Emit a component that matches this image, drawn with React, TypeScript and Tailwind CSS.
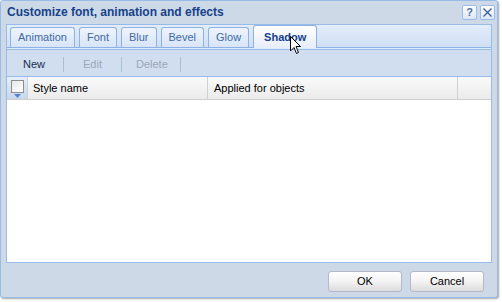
import React from "react";

const tabs = ["Animation", "Font", "Blur", "Bevel", "Glow", "Shadow"];

export default function App() {
  return (
    <div className="w-[502px] h-[302px] bg-white" style={{ fontFamily: '"Liberation Sans", Arial, sans-serif' }}>
      <div className="w-[498px] h-[298px] border border-[#99bbe8] rounded-[3px] bg-[#ced9e7] flex flex-col shadow-[1px_1px_2px_rgba(0,0,0,0.35)]">
        {/* title */}
        <div className="h-[22px] flex items-center justify-between pl-[6px] pr-[2px] shrink-0">
          <span className="text-[12px] font-bold text-[#15428b] leading-none">Customize font, animation and effects</span>
          <div className="flex gap-[3px]">
            <div className="w-[15px] h-[15px] rounded-[2px] border border-[#99bbe8] bg-gradient-to-b from-white to-[#dce6f4] flex items-center justify-center text-[11px] font-bold text-[#4d6fa6] leading-none">?</div>
            <div className="w-[15px] h-[15px] rounded-[2px] border border-[#99bbe8] bg-gradient-to-b from-white to-[#dce6f4] flex items-center justify-center">
              <svg width="11" height="11" viewBox="0 0 11 11"><path d="M1.5 1.5 L9.5 9.5 M9.5 1.5 L1.5 9.5" stroke="#3e63a0" strokeWidth="1.4" /></svg>
            </div>
          </div>
        </div>
        {/* body */}
        <div className="mx-[5px] mt-[1px] h-[239px] border border-[#99bbe8] flex flex-col shrink-0">
          {/* tab strip */}
          <div className="h-[23px] bg-gradient-to-b from-[#e3edfa] to-[#cfdff4] border-b border-[#8db2e3] flex items-end pl-[3px] gap-[4px] shrink-0">
            {tabs.map((t) => {
              const active = t === "Shadow";
              return active ? (
                <div key={t} className="h-[23px] -mb-px px-[10px] rounded-t-[3px] border border-b-0 border-[#8db2e3] bg-gradient-to-b from-white to-[#e6eefa] flex items-center text-[11px] font-bold text-[#15428b] relative">
                  {t}
                  <svg className="absolute left-[36px] top-[10px]" width="12" height="19" viewBox="0 0 12 19">
                    <path d="M0.5 0.5 L0.5 15 L4 11.5 L6.5 17.5 L8.5 16.5 L6 10.5 L10.5 10.5 Z" fill="white" stroke="black" strokeWidth="1" strokeLinejoin="round" />
                  </svg>
                </div>
              ) : (
                <div key={t} className="h-[20px] px-[7px] rounded-t-[3px] border border-b-0 border-[#8db2e3] bg-gradient-to-b from-[#eef4fd] to-[#d7e5f7] flex items-center text-[11px] text-[#416aa3]">
                  {t}
                </div>
              );
            })}
          </div>
          <div className="h-[2px] bg-[#deecfd] border-b border-[#99bbe8] shrink-0" />
          {/* toolbar */}
          <div className="h-[27px] bg-[#d0def0] border-b border-[#99bbe8] flex items-center text-[11px] shrink-0 pt-[2px]">
            <span className="ml-[16px] text-[#1a2d4e]">New</span>
            <div className="w-px h-[15px] bg-[#a9bfd6] ml-[18px]" />
            <span className="ml-[19px] text-[#9aa7b7]">Edit</span>
            <div className="w-px h-[15px] bg-[#a9bfd6] ml-[19px]" />
            <span className="ml-[14px] text-[#9aa7b7]">Delete</span>
            <div className="w-px h-[15px] bg-[#a9bfd6] ml-[12px]" />
          </div>
          {/* grid header */}
          <div className="h-[23px] bg-gradient-to-b from-[#fafafa] to-[#ebebeb] border-b border-[#d0d0d0] flex text-[11px] text-black shrink-0">
            <div className="w-[21px] border-r border-[#d0d0d0] bg-gradient-to-b from-[#e6eefa] to-[#c7d7ee] flex flex-col items-center pt-[3px] relative">
              <div className="w-[13px] h-[13px] border border-[#8d8d8d] bg-gradient-to-br from-[#e8e8e8] to-white" />
              <svg className="absolute bottom-[1px]" width="7" height="4" viewBox="0 0 7 4"><path d="M0 0 L7 0 L3.5 4 Z" fill="#5a84c8" /></svg>
            </div>
            <div className="w-[180px] border-r border-[#d0d0d0] flex items-center pl-[5px]">Style name</div>
            <div className="w-[250px] border-r border-[#d0d0d0] flex items-center pl-[6px]">Applied for objects</div>
            <div className="flex-1" />
          </div>
          <div className="flex-1 bg-white" />
        </div>
        {/* footer */}
        <div className="flex-1 flex items-center justify-end gap-[8px] pr-[13px] pt-[2px]">
          {["OK", "Cancel"].map((b) => (
            <div key={b} className="w-[74px] h-[21px] rounded-[3px] border border-[#b5b8c8] bg-gradient-to-b from-white via-[#f3f3f3] to-[#dcdcdc] flex items-center justify-center text-[11px] text-black">
              {b}
            </div>
          ))}
        </div>
      </div>
    </div>
  );
}
